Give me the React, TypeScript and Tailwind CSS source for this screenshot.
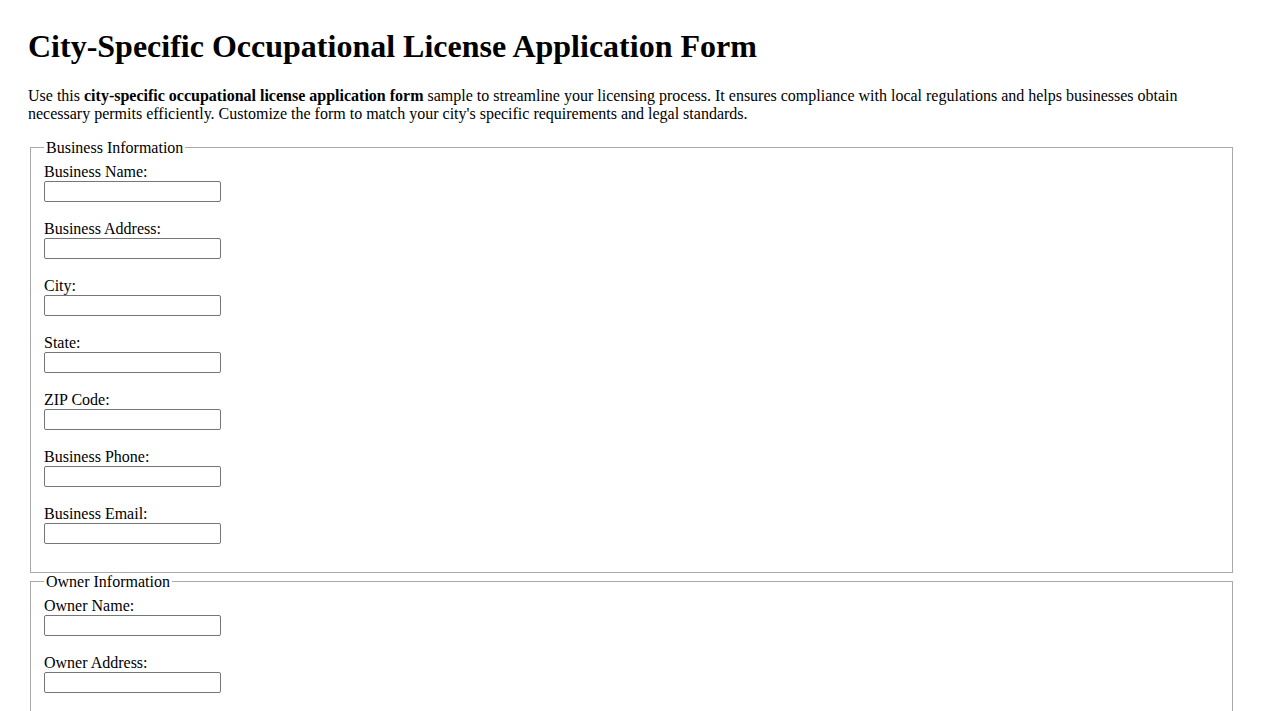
import React from "react";

const business = [
  "Business Name:",
  "Business Address:",
  "City:",
  "State:",
  "ZIP Code:",
  "Business Phone:",
  "Business Email:",
];

const owner = ["Owner Name:", "Owner Address:", "Owner Phone:", "Owner Email:"];

function Field({ label }: { label: string }) {
  return (
    <>
      <label>{label}</label>
      <br />
      <input
        type="text"
        className="inline-block w-[177px] h-[21px] border border-solid border-[#767676] rounded-[2px] bg-white px-[2px] py-[1px] text-[13.33px] leading-[normal] font-['Liberation_Sans',Arial,sans-serif] align-baseline"
      />
      <br />
      <br />
    </>
  );
}

function Section({ title, fields }: { title: string; fields: string[] }) {
  return (
    <fieldset className="mx-[2px] border border-solid border-[#a9a9a9] pt-[6px] pb-[10px] px-[13px] min-w-min">
      <legend className="px-[2px]">{title}</legend>
      {fields.map((f) => (
        <Field key={f} label={f} />
      ))}
    </fieldset>
  );
}

export default function App() {
  return (
    <div className="bg-white text-black min-h-screen px-[28px] pt-[7px] pb-[8px] text-[16px] leading-[normal] font-['Liberation_Serif','Times_New_Roman',serif]">
      <h1 className="text-[32px] font-bold mt-[21.44px] mb-[21.44px] leading-[normal]">
        City-Specific Occupational License Application Form
      </h1>
      <p className="mb-[16px] leading-[normal]">
        Use this <strong className="font-bold">city-specific occupational license application form</strong> sample
        to streamline your licensing process. It ensures compliance with local regulations and helps businesses
        obtain necessary permits efficiently. Customize the form to match your city's specific requirements and
        legal standards.
      </p>
      <form className="leading-[normal]">
        <Section title="Business Information" fields={business} />
        <Section title="Owner Information" fields={owner} />
      </form>
    </div>
  );
}
